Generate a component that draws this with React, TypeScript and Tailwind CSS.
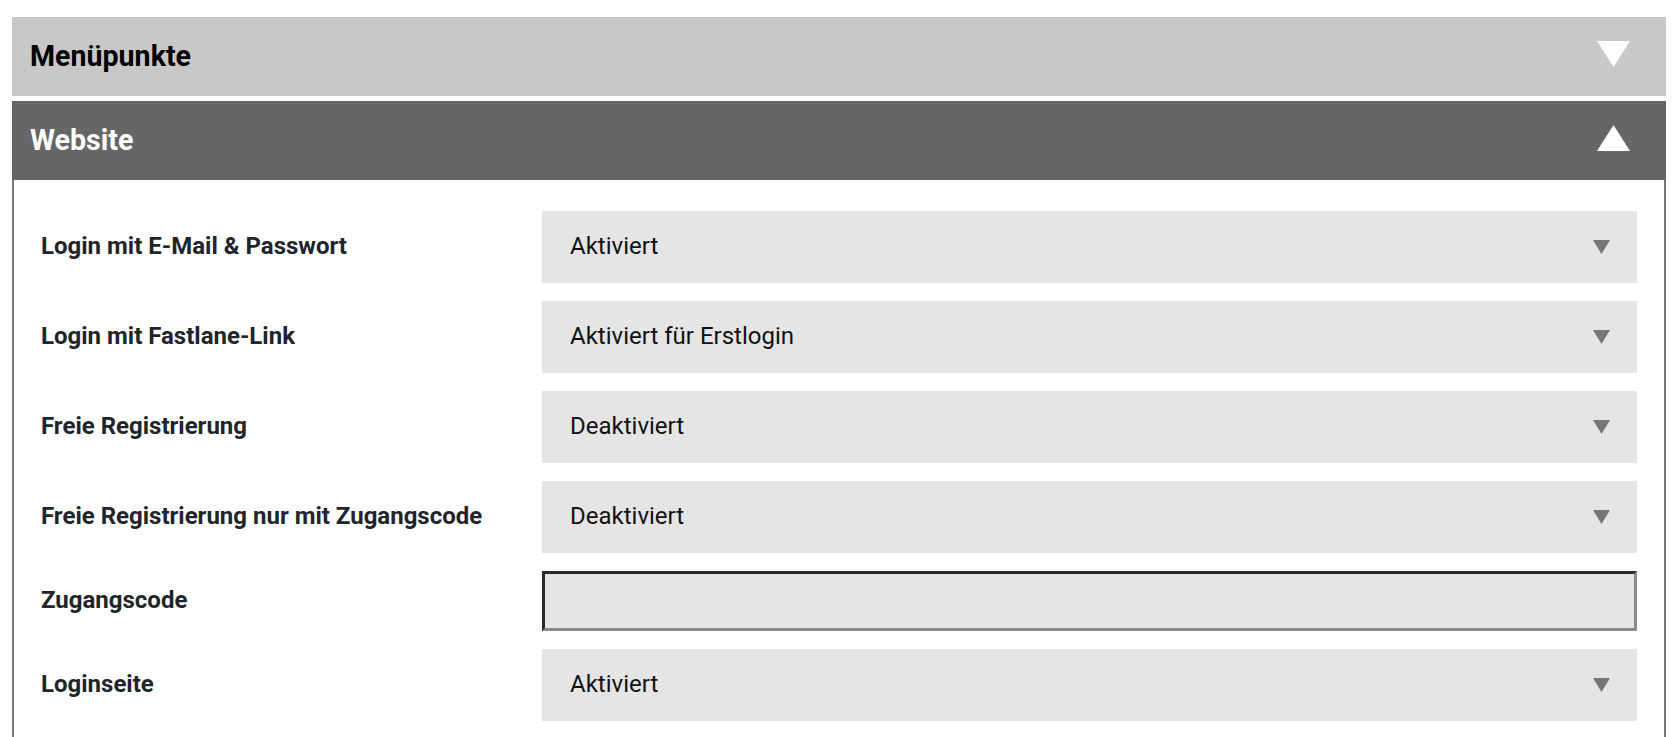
import React from "react";

type Row =
  | { label: string; kind: "select"; value: string }
  | { label: string; kind: "input" };

const rows: Row[] = [
  { label: "Login mit E-Mail & Passwort", kind: "select", value: "Aktiviert" },
  { label: "Login mit Fastlane-Link", kind: "select", value: "Aktiviert für Erstlogin" },
  { label: "Freie Registrierung", kind: "select", value: "Deaktiviert" },
  { label: "Freie Registrierung nur mit Zugangscode", kind: "select", value: "Deaktiviert" },
  { label: "Zugangscode", kind: "input" },
  { label: "Loginseite", kind: "select", value: "Aktiviert" },
];

function HeaderTriangle({ up }: { up?: boolean }) {
  return (
    <svg width="33" height="26" viewBox="0 0 33 26" className="-translate-y-[3px]">
      {up ? (
        <polygon points="16.5,0 33,26 0,26" fill="#ffffff" />
      ) : (
        <polygon points="0,0 33,0 16.5,26" fill="#ffffff" />
      )}
    </svg>
  );
}

function Caret() {
  return (
    <svg width="17" height="14" viewBox="0 0 17 14">
      <polygon points="0,0 17,0 8.5,14" fill="#777777" />
    </svg>
  );
}

export default function App() {
  return (
    <div
      className="min-h-screen bg-white pt-[17px] pl-[12px] pr-[14px]"
      style={{ fontFamily: "Roboto, 'Noto Sans', Arial, sans-serif" }}
    >
      <div className="flex h-[79px] items-center justify-between bg-[#c8c8c8] pl-[18px] pr-[36px]">
        <span className="text-[28.6px] font-bold text-black">Menüpunkte</span>
        <HeaderTriangle />
      </div>

      <div className="mt-[5px] flex h-[79px] items-center justify-between bg-[#666666] pl-[18px] pr-[36px]">
        <span className="text-[28.6px] font-bold text-white">Website</span>
        <HeaderTriangle up />
      </div>

      <div className="flex flex-col gap-[18px] border-x-2 border-[#777777] px-[27px] pt-[31px] pb-[30px]">
        {rows.map((row) => (
          <div key={row.label} className="flex items-center">
            <div className="w-[501px] shrink-0 -translate-y-[1px] text-[24px] font-bold text-[#212529]">
              {row.label}
            </div>
            {row.kind === "select" ? (
              <div className="flex h-[72px] flex-1 items-center justify-between bg-[#e5e5e5] pl-[28px] pr-[27px]">
                <span className="-translate-y-[1px] text-[24px] text-[#111111]">{row.value}</span>
                <Caret />
              </div>
            ) : (
              <div className="h-[60px] flex-1 border-[3px] border-t-[#2b2b2b] border-l-[#2b2b2b] border-b-[#8a8a8a] border-r-[#8a8a8a] bg-[#e5e5e5]" />
            )}
          </div>
        ))}
      </div>
    </div>
  );
}
